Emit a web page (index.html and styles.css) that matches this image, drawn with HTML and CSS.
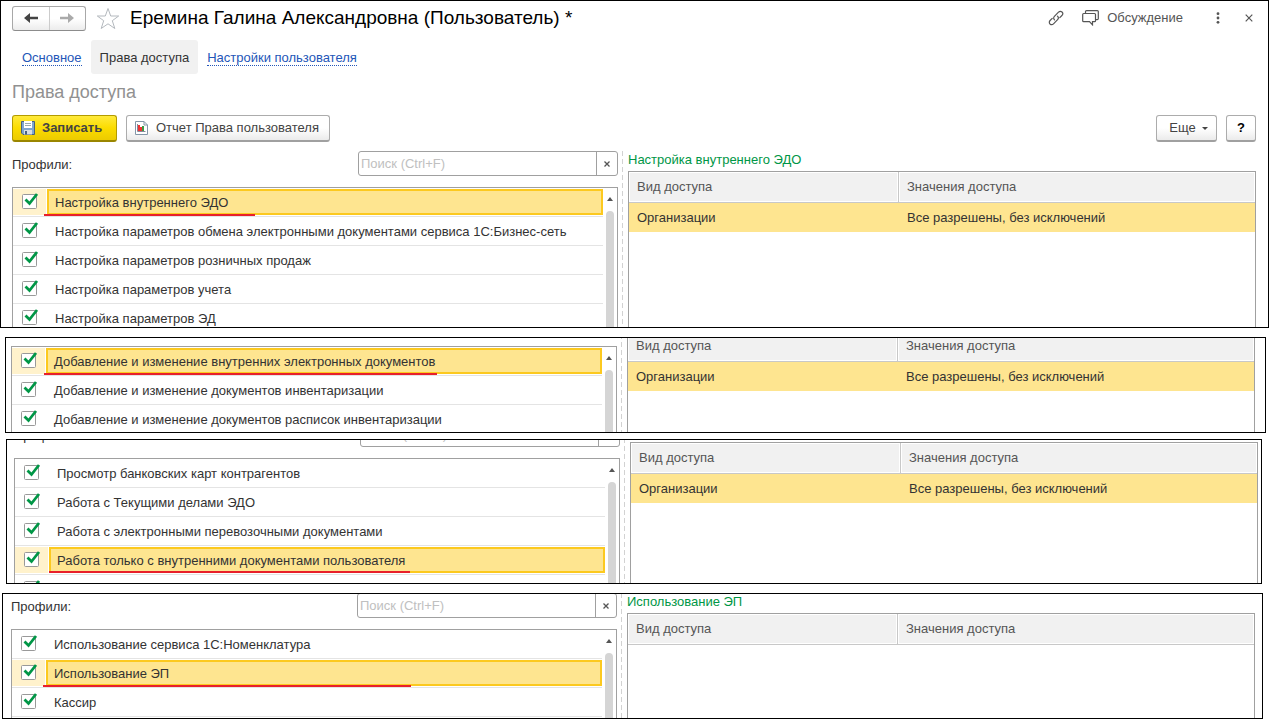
FILE: index.html
```html
<!DOCTYPE html>
<html lang="ru">
<head>
<meta charset="utf-8">
<title>Права доступа</title>
<link rel="stylesheet" href="styles.css">
</head>
<body>
<main class="page">

<section class="frame frame-main">
  <header class="titlebar">
    <div class="nav">
      <button class="nav-btn" aria-label="Назад"><svg width="14" height="12" viewBox="0 0 14 12"><path d="M0 6 6 1v3.700h8v2.600H6V11z" fill="#444"/></svg></button>
      <button class="nav-btn" aria-label="Вперед"><svg width="14" height="12" viewBox="0 0 14 12"><path d="M14 6 8 1v3.700H0v2.600h8V11z" fill="#aaa"/></svg></button>
    </div>
    <button class="plain star" aria-label="Избранное"><svg width="24" height="23" viewBox="0 0 24 23"><path d="M12 1.500 14.700 9h8L16.300 13.700 18.800 21.500 12 16.800 5.200 21.500 7.700 13.700 1.300 9h8z" fill="#fff" stroke="#b4b9be"/></svg></button>
    <h1 class="title">Еремина Галина Александровна (Пользователь) *</h1>
    <div class="tools">
      <button class="plain" aria-label="Ссылка"><svg width="16" height="16" viewBox="0 0 16 16" fill="none" stroke="#555" stroke-width="1.200" stroke-linecap="round"><path d="M6.500 9.800C5.300 8.600 5.500 7.300 6.400 6.400L10.500 2.200C11.600 1.100 13.100 1.200 14 2 14.900 2.900 15 4.400 13.900 5.500L11.800 7.600"/><path d="M9.500 6.200C10.700 7.400 10.500 8.700 9.600 9.600L5.500 13.800C4.400 14.900 2.900 14.800 2 14 1.100 13.100 1 11.600 2.100 10.500L4.200 8.400"/></svg></button>
      <button class="plain discuss"><svg width="17" height="16" viewBox="0 0 17 16" fill="none" stroke="#555" stroke-width="1.200"><path d="M3.500 3V1.500Q3.500.6 4.500.6H15.400Q16.300.6 16.300 1.500V8.500Q16.300 9.600 15.200 9.600H14"/><path d="M1.600 3.500H12.600Q13.500 3.500 13.500 4.400V10.700Q13.500 11.600 12.600 11.600H10.500V14.800L7.500 11.600H1.600Q.7 11.600.7 10.700V4.400Q.7 3.500 1.600 3.500Z"/></svg><span>Обсуждение</span></button>
      <button class="plain dots" aria-label="Меню"><svg width="4" height="12" viewBox="0 0 4 12" fill="#555"><circle cx="2" cy="1.700" r="1.400"/><circle cx="2" cy="6" r="1.400"/><circle cx="2" cy="10.300" r="1.400"/></svg></button>
      <button class="plain close" aria-label="Закрыть"><svg width="8" height="8" viewBox="0 0 8 8" stroke="#555" stroke-width="1.200"><path d="M.7.7 7.300 7.300M7.300.7.7 7.300"/></svg></button>
    </div>
  </header>
  <nav class="tabs">
    <a class="tab" href="#main"><span>Основное</span></a>
    <a class="tab tab-active" href="#rights" aria-current="page">Права доступа</a>
    <a class="tab" href="#settings"><span>Настройки пользователя</span></a>
  </nav>
  <h2 class="subtitle">Права доступа</h2>
  <div class="commands">
    <button class="btn btn-save"><svg width="14" height="14" viewBox="0 0 14 14"><path d="M.5.5h13v13H2L.5 12z" fill="#7fa6cf" stroke="#48617e"/><path d="M3 0h8v7H3z" fill="#fff"/><path d="M4 2.500h6M4 4.500h6" stroke="#9aa"/><path d="M3 9h8v4.500H3z" fill="#d8dde2"/><path d="M4 10h2v3.500H4z" fill="#48617e"/></svg>Записать</button>
    <button class="btn btn-report"><svg width="13" height="14" viewBox="0 0 13 14"><path d="M.5.5H9L12.500 4V13.500H.5z" fill="#fff" stroke="#8496a8"/><path d="M9 .5V4h3.500" fill="none" stroke="#8496a8"/><path d="M3 4h2v6H3z" fill="#e33"/><path d="M5 6h2v4H5z" fill="#e33"/><path d="M7 5h2v5H7z" fill="#3a9c45"/><path d="M2.500 3v7.500h8" fill="none" stroke="#889"/></svg>Отчет Права пользователя</button>
    <button class="btn btn-more">Еще<i class="caret"></i></button>
    <button class="btn btn-help">?</button>
  </div>
  <div class="window window-1">
    <div class="split">
      <div class="left">
        <div class="filter">
          <label for="q1">Профили:</label>
          <div class="search"><input id="q1" type="text" placeholder="Поиск (Ctrl+F)"><button aria-label="Очистить"><svg width="6" height="6" viewBox="0 0 6 6" stroke="#555" stroke-width="1.300"><path d="M.5.5 5.500 5.500M5.500.5.5 5.500"/></svg></button></div>
        </div>
        <div class="list">
          <ul class="rows">
            <li class="row selected"><label><input type="checkbox" checked><span>Настройка внутреннего ЭДО</span></label><i class="mark mark-1"></i></li>
            <li class="row"><label><input type="checkbox" checked><span>Настройка параметров обмена электронными документами сервиса 1С:Бизнес-сеть</span></label></li>
            <li class="row"><label><input type="checkbox" checked><span>Настройка параметров розничных продаж</span></label></li>
            <li class="row"><label><input type="checkbox" checked><span>Настройка параметров учета</span></label></li>
            <li class="row"><label><input type="checkbox" checked><span>Настройка параметров ЭД</span></label></li>
          </ul>
          <div class="scroll"><i class="up"></i><i class="thumb"></i></div>
        </div>
      </div>
      <div class="divider"></div>
      <div class="right">
        <h3 class="caption">Настройка внутреннего ЭДО</h3>
        <div class="grid"><table>
          <thead><tr><th>Вид доступа</th><th>Значения доступа</th></tr></thead>
          <tbody><tr><td>Организации</td><td>Все разрешены, без исключений</td></tr></tbody>
        </table></div>
      </div>
    </div>
  </div>
</section>

<section class="frame frame-2">
  <div class="window window-2">
    <div class="split">
      <div class="left">
        <div class="filter"></div>
        <div class="list">
          <ul class="rows">
            <li class="row selected"><label><input type="checkbox" checked><span>Добавление и изменение внутренних электронных документов</span></label><i class="mark mark-2"></i></li>
            <li class="row"><label><input type="checkbox" checked><span>Добавление и изменение документов инвентаризации</span></label></li>
            <li class="row"><label><input type="checkbox" checked><span>Добавление и изменение документов расписок инвентаризации</span></label></li>
          </ul>
          <div class="scroll"><i class="up"></i><i class="thumb"></i></div>
        </div>
      </div>
      <div class="divider"></div>
      <div class="right">
        <div class="caption"></div>
        <div class="grid"><table>
          <thead><tr><th>Вид доступа</th><th>Значения доступа</th></tr></thead>
          <tbody><tr><td>Организации</td><td>Все разрешены, без исключений</td></tr></tbody>
        </table></div>
      </div>
    </div>
  </div>
</section>

<section class="frame frame-3">
  <div class="window window-3">
    <div class="split">
      <div class="left">
        <div class="filter">
          <label for="q3">Профили:</label>
          <div class="search"><input id="q3" type="text" placeholder="Поиск (Ctrl+F)"><button aria-label="Очистить"></button></div>
        </div>
        <div class="list">
          <ul class="rows">
            <li class="row"><label><input type="checkbox" checked><span>Просмотр банковских карт контрагентов</span></label></li>
            <li class="row"><label><input type="checkbox" checked><span>Работа с Текущими делами ЭДО</span></label></li>
            <li class="row"><label><input type="checkbox" checked><span>Работа с электронными перевозочными документами</span></label></li>
            <li class="row selected"><label><input type="checkbox" checked><span>Работа только с внутренними документами пользователя</span></label><i class="mark mark-3"></i></li>
            <li class="row"><label><input type="checkbox" checked aria-label="Профиль"><span></span></label></li>
          </ul>
          <div class="scroll"><i class="up"></i><i class="thumb"></i></div>
        </div>
      </div>
      <div class="divider"></div>
      <div class="right">
        <div class="caption"></div>
        <div class="grid"><table>
          <thead><tr><th>Вид доступа</th><th>Значения доступа</th></tr></thead>
          <tbody><tr><td>Организации</td><td>Все разрешены, без исключений</td></tr></tbody>
        </table></div>
      </div>
    </div>
  </div>
</section>

<section class="frame frame-4">
  <div class="window window-4">
    <div class="split">
      <div class="left">
        <div class="filter">
          <label for="q4">Профили:</label>
          <div class="search"><input id="q4" type="text" placeholder="Поиск (Ctrl+F)"><button aria-label="Очистить"><svg width="6" height="6" viewBox="0 0 6 6" stroke="#555" stroke-width="1.300"><path d="M.5.5 5.500 5.500M5.500.5.5 5.500"/></svg></button></div>
        </div>
        <div class="list">
          <ul class="rows">
            <li class="row"><label><input type="checkbox" checked><span>Использование сервиса 1С:Номенклатура</span></label></li>
            <li class="row selected"><label><input type="checkbox" checked><span>Использование ЭП</span></label><i class="mark mark-4"></i></li>
            <li class="row"><label><input type="checkbox" checked><span>Кассир</span></label></li>
            <li class="row"></li>
          </ul>
          <div class="scroll"><i class="up"></i><i class="thumb"></i></div>
        </div>
      </div>
      <div class="divider"></div>
      <div class="right">
        <h3 class="caption">Использование ЭП</h3>
        <div class="grid"><table>
          <thead><tr><th>Вид доступа</th><th>Значения доступа</th></tr></thead>
        </table></div>
      </div>
    </div>
  </div>
</section>

</main>
</body>
</html>
```
FILE: styles.css
```css
* { box-sizing: border-box; }
body {
  margin: 0;
  background: #fff;
  color: #333;
  font: 13px/16px "Liberation Sans", Arial, sans-serif;
}
button, input { font: inherit; color: inherit; }
h1, h2, h3, ul { margin: 0; padding: 0; font-weight: normal; }
ul { list-style: none; }
svg { display: block; flex: none; }

.frame { border: 1px solid #000; overflow: hidden; }
.frame-main { padding: 0 12px 0 11px; }
.frame-2 { margin: 9px 3px 0 5px; padding: 0 10px 0 5px; }
.frame-3 { margin: 6px 7px 0 6px; padding: 0 3px 0 7px; }
.frame-4 { margin: 9px 6px 0 2px; padding: 0 7px 0 8px; }

/* Title bar */
.titlebar { display: flex; align-items: center; height: 34px; }
.nav {
  display: flex;
  width: 74px;
  height: 25px;
  border: 1px solid #a8a8a8;
  border-bottom-color: #8c8c8c;
  border-radius: 3px;
  background: linear-gradient(#fff 50%, #ececec);
}
.nav-btn {
  flex: 1;
  display: flex;
  align-items: center;
  justify-content: center;
  padding: 0;
  border: 0;
  background: none;
}
.nav-btn + .nav-btn { border-left: 1px solid #ccc; }
.plain { display: flex; align-items: center; padding: 0; border: 0; background: none; }
.star { margin: 0 10px; }
.title { color: #000; font-size: 19px; line-height: 24px; white-space: nowrap; }
.tools { display: flex; align-items: center; margin-left: auto; padding-right: 3px; color: #555; }
.discuss { gap: 8px; margin-left: 18px; }
.dots { margin-left: 33px; }
.close { margin-left: 25px; }

/* Tabs */
.tabs { display: flex; margin-top: 5px; padding-left: 1px; }
.tab {
  padding: 10px 9px 8px;
  border-radius: 3px;
  color: #2456b8;
  text-decoration: none;
}
.tab span { border-bottom: 1px dotted #2456b8; }
.tab-active { background: #f1f1f1; color: #333; }
.subtitle { margin-top: 6px; color: #919191; font-size: 18px; line-height: 24px; }

/* Command bar */
.commands { display: flex; gap: 9px; margin-top: 11px; }
.btn {
  display: flex;
  align-items: center;
  justify-content: center;
  height: 27px;
  padding: 0 8px;
  border: 1px solid #acacac;
  border-bottom: 2px solid #a0a0a0;
  border-radius: 3px;
  background: linear-gradient(#fff 50%, #ebebeb);
  color: #444;
}
.btn-save {
  width: 105px;
  gap: 7px;
  justify-content: flex-start;
  border-color: #b39b00;
  border-bottom-color: #9a8600;
  background: linear-gradient(#ffea3c, #fbdc00 50%, #eccb00);
  font-weight: bold;
}
.btn-report { width: 204px; gap: 8px; justify-content: flex-start; }
.btn-more { width: 61px; gap: 6px; margin-left: auto; padding-left: 12px; }
.btn-help { width: 30px; color: #000; font-weight: bold; }
.caret { border: 3px solid transparent; border-top-color: #444; border-bottom: 0; }

/* Split view, shown through a window of limited height */
.window { display: flex; flex-direction: column; overflow: hidden; }
.window-1 { height: 176px; margin-top: 9px; }
.window-2 { height: 94px; }
.window-3 { height: 143px; }
.window-4 { height: 124px; }
.split {
  flex: 1;
  display: grid;
  grid-template-columns: 606fr 10px 628fr;
  grid-template-rows: minmax(0, 1fr);
  min-height: 0;
}
.window-2 .split { margin-top: -28px; }
.window-3 .split { margin-top: -18px; }
.window-4 .split { margin-top: -1px; }
.left, .right { display: flex; flex-direction: column; min-width: 0; min-height: 0; }
.divider {
  width: 1px;
  margin-left: 4px;
  background: repeating-linear-gradient(#d2d2d2 0 5px, transparent 5px 8px);
}

.filter { display: flex; justify-content: space-between; height: 36px; padding-bottom: 11px; }
.filter label { padding-top: 6px; }
.search {
  display: flex;
  width: 260px;
  border: 1px solid #a0a0a0;
  border-radius: 3px;
}
.search input { flex: 1; min-width: 0; padding: 0 2px; border: 0; background: none; outline: 0; }
.search input::placeholder { color: #c0c0c0; opacity: 1; }
.search button {
  display: flex;
  align-items: center;
  justify-content: center;
  width: 21px;
  padding: 0;
  border: 0;
  border-left: 1px solid #a0a0a0;
  background: none;
}

.list {
  flex: 1;
  display: flex;
  min-height: 0;
  border: 1px solid #a0a0a0;
  border-bottom: 0;
  overflow: hidden;
}
.rows { flex: 1; min-width: 0; }
.row { position: relative; height: 29px; border-bottom: 1px solid #e4e4e4; }
.row label { display: flex; align-items: center; height: 28px; }
.row input {
  appearance: none;
  flex: none;
  width: 17px;
  height: 17px;
  margin: 0 8px 2px 9px;
  background: url("data:image/svg+xml,%3Csvg xmlns='http://www.w3.org/2000/svg' width='17' height='17'%3E%3Crect x='.5' y='1.5' width='14' height='14' rx='1' fill='%23fff' stroke='%23999'/%3E%3Cpath d='M3.500 6.500 7.500 10.500 15 1' fill='none' stroke='%23009646' stroke-width='2.800'/%3E%3C/svg%3E");
}
.row span {
  flex: 1;
  height: 26px;
  padding: 4px 6px 2px;
  border: 2px solid transparent;
  white-space: nowrap;
}
.selected label { background: linear-gradient(90deg, #fff2cc 33px, #fff 33px) 0 1px / 100% 26px no-repeat; }
.selected span { border-color: #fcc91f; background: #fee590; }
.mark { position: absolute; top: 26px; left: 31px; height: 2px; background: #e8202a; }
.mark-1 { width: 211px; }
.mark-2 { width: 393px; left: 32px; }
.mark-3 { width: 361px; left: 34px; top: 25px; }
.mark-4 { width: 368px; }

.scroll { display: flex; flex-direction: column; align-items: center; width: 14px; }
.up { margin-top: 9px; border: 3px solid transparent; border-bottom: 4px solid #555; border-top: 0; }
.thumb { flex: 1; width: 8px; margin-top: 10px; border-radius: 4px 4px 0 0; background: #d5d5d5; }

.caption { height: 20px; color: #009646; font-size: 13px; line-height: 18px; }
.grid { flex: 1; min-height: 0; border: 1px solid #a0a0a0; border-bottom: 0; overflow: hidden; }
table { width: 100%; border-collapse: separate; border-spacing: 0; table-layout: fixed; }
th, td { padding: 0 8px; text-align: left; font-weight: normal; }
th {
  height: 31px;
  border-bottom: 1px solid #c8c8c8;
  background: #f1f1f1;
  box-shadow: inset 0 0 0 1px #fff;
  color: #555;
}
th:first-child { width: 270px; border-right: 1px solid #c8c8c8; }
td { height: 29px; background: #fee590; }
```
